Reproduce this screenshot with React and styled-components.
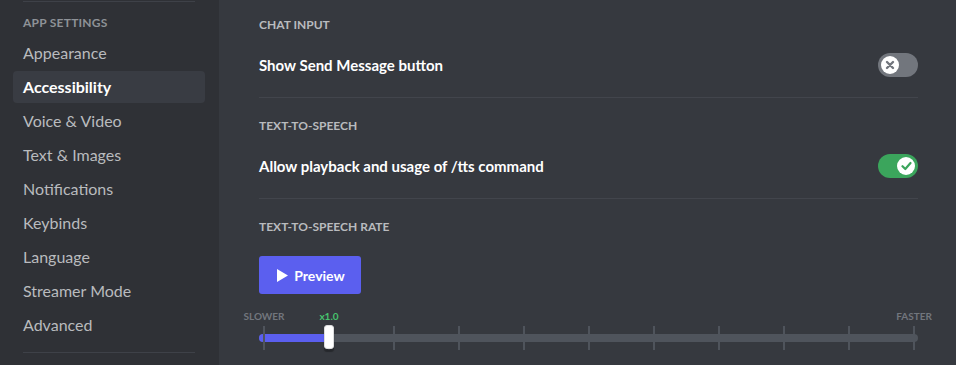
import styled, { createGlobalStyle } from 'styled-components';

const GlobalStyle = createGlobalStyle`
    html, body {
        margin: 0;
        padding: 0;
        background: #36393f;
        font-family: Lato, "Noto Sans", sans-serif;
        -webkit-font-smoothing: antialiased;
    }
`

const navItems = ['Appearance', 'Accessibility', 'Voice & Video', 'Text & Images', 'Notifications', 'Keybinds', 'Language', 'Streamer Mode', 'Advanced'];

const ticks = Array.from({length: 11}, (_, i) => i);

const XIcon = () => (
    <svg width="10" height="10" viewBox="0 0 10 10">
        <path d="M2 2 L8 8 M8 2 L2 8" stroke="#72767d" strokeWidth="2.4" strokeLinecap="round"/>
    </svg>
)

const CheckIcon = () => (
    <svg width="11" height="10" viewBox="0 0 11 10">
        <path d="M1.5 5.2 L4.3 8 L9.5 2" stroke="#3ba55c" strokeWidth="2.2" fill="none" strokeLinecap="round" strokeLinejoin="round"/>
    </svg>
)

const Toggle = ({on}) => (
    <Switch $on={on}>
        <Knob $on={on}>{on ? <CheckIcon/> : <XIcon/>}</Knob>
    </Switch>
)

const App = () => {
    return (
        <Page>
            <GlobalStyle/>
            <Sidebar>
                <Separator/>
                <NavHeader>App Settings</NavHeader>
                {navItems.map(item => (
                    <NavItem key={item} $selected={item === 'Accessibility'}>{item}</NavItem>
                ))}
                <Separator $bottom/>
            </Sidebar>

            <Content>
                <SectionTitle>Chat Input</SectionTitle>
                <Row>
                    <RowLabel>Show Send Message button</RowLabel>
                    <Toggle on={false}/>
                </Row>
                <Divider/>

                <SectionTitle>Text-to-Speech</SectionTitle>
                <Row>
                    <RowLabel>Allow playback and usage of /tts command</RowLabel>
                    <Toggle on={true}/>
                </Row>
                <Divider/>

                <SectionTitle>Text-to-Speech Rate</SectionTitle>
                <PreviewButton>
                    <svg width="11" height="13" viewBox="0 0 11 13">
                        <path d="M0 0 L11 6.5 L0 13 Z" fill="#fff"/>
                    </svg>
                    Preview
                </PreviewButton>

                <Slider>
                    <Track>
                        <Fill style={{width: '70px'}}/>
                    </Track>
                    <Marks>
                        {ticks.map(i => (
                            <Tick key={i} style={{left: `${i * 10}%`}}/>
                        ))}
                        <MarkLabel style={{left: '0%'}}>Slower</MarkLabel>
                        <MarkLabel $active style={{left: '10%'}}>x1.0</MarkLabel>
                        <MarkLabel style={{left: '100%'}}>Faster</MarkLabel>
                        <Thumb style={{left: '10%'}}/>
                    </Marks>
                </Slider>
            </Content>
        </Page>
    )
}

const Page = styled.div`
    display: flex;
    width: 956px;
    height: 365px;
    overflow: hidden;
    background: #36393f;
`

const Sidebar = styled.nav`
    display: flex;
    flex-direction: column;
    width: 219px;
    flex-shrink: 0;
    box-sizing: border-box;
    padding: 1px 14px 0 13px;
    background: #2f3136;
`

const Separator = styled.div`
    height: 1px;
    margin: ${props => props.$bottom ? '9px 10px 0' : '0 10px 8px'};
    background: rgba(79, 84, 92, 0.48);
    flex-shrink: 0;
`

const NavHeader = styled.div`
    padding: 5px 10px 6px;
    font-size: 12px;
    line-height: 16px;
    font-weight: 700;
    text-transform: uppercase;
    letter-spacing: 0.02em;
    color: #8e9297;
`

const NavItem = styled.div`
    flex-shrink: 0;
    height: 32px;
    margin-bottom: 2px;
    padding: 0 10px 2px;
    box-sizing: border-box;
    display: flex;
    align-items: center;
    border-radius: 4px;
    font-size: 16px;
    font-weight: ${props => props.$selected ? 700 : 400};
    color: ${props => props.$selected ? '#ffffff' : '#b9bbbe'};
    background: ${props => props.$selected ? '#393c43' : 'transparent'};
`

const Content = styled.main`
    flex: 1;
    display: flex;
    flex-direction: column;
    padding: 17px 38px 0 40px;
`

const SectionTitle = styled.h5`
    margin: 0;
    font-size: 12px;
    line-height: 16px;
    font-weight: 700;
    text-transform: uppercase;
    color: #b9bbbe;
`

const Row = styled.div`
    display: flex;
    align-items: center;
    justify-content: space-between;
    height: 24px;
    margin-top: 20px;
`

const RowLabel = styled.div`
    font-size: 15px;
    line-height: 24px;
    font-weight: 700;
    color: #ffffff;
    padding-bottom: 1px;
`

const Divider = styled.div`
    height: 1px;
    margin: 20px 0;
    background: rgba(79, 84, 92, 0.48);
`

const Switch = styled.div`
    position: relative;
    width: 40px;
    height: 24px;
    border-radius: 14px;
    background: ${props => props.$on ? '#3ba55c' : '#72767d'};
`

const Knob = styled.div`
    position: absolute;
    top: 3px;
    left: ${props => props.$on ? '19px' : '3px'};
    width: 18px;
    height: 18px;
    border-radius: 50%;
    background: #ffffff;
    display: flex;
    align-items: center;
    justify-content: center;
`

const PreviewButton = styled.button`
    display: flex;
    align-items: center;
    justify-content: center;
    gap: 6px;
    width: 102px;
    height: 38px;
    margin-top: 21px;
    border: none;
    border-radius: 3px;
    background: #5b5fef;
    color: #ffffff;
    font-family: inherit;
    font-size: 14px;
    font-weight: 700;
    padding: 0 0 0 2px;
`

const Slider = styled.div`
    position: relative;
    height: 50px;
    margin-top: 16px;
`

const Marks = styled.div`
    position: absolute;
    top: 0;
    bottom: 0;
    left: 5px;
    right: 4px;
`

const Tick = styled.div`
    position: absolute;
    top: 16px;
    width: 2px;
    height: 24px;
    transform: translateX(-50%);
    background: #4f545c;
`

const MarkLabel = styled.div`
    position: absolute;
    top: 0px;
    transform: translateX(-50%);
    font-size: 10px;
    line-height: 12px;
    font-weight: 700;
    color: ${props => props.$active ? '#46c46e' : '#72767d'};
    white-space: nowrap;
    text-transform: ${props => props.$active ? 'none' : 'uppercase'};
`

const Track = styled.div`
    position: absolute;
    left: 0;
    right: 0;
    top: 24px;
    height: 8px;
    border-radius: 4px;
    background: #4f545c;
    overflow: hidden;
`

const Fill = styled.div`
    height: 100%;
    background: #5b5fef;
`

const Thumb = styled.div`
    position: absolute;
    top: 15px;
    width: 10px;
    height: 24px;
    transform: translateX(-50%);
    border-radius: 3px;
    background: #ffffff;
    border: 1px solid #dcddde;
    box-sizing: border-box;
    box-shadow: 0 3px 1px rgba(0, 0, 0, 0.3);
`

export default App
